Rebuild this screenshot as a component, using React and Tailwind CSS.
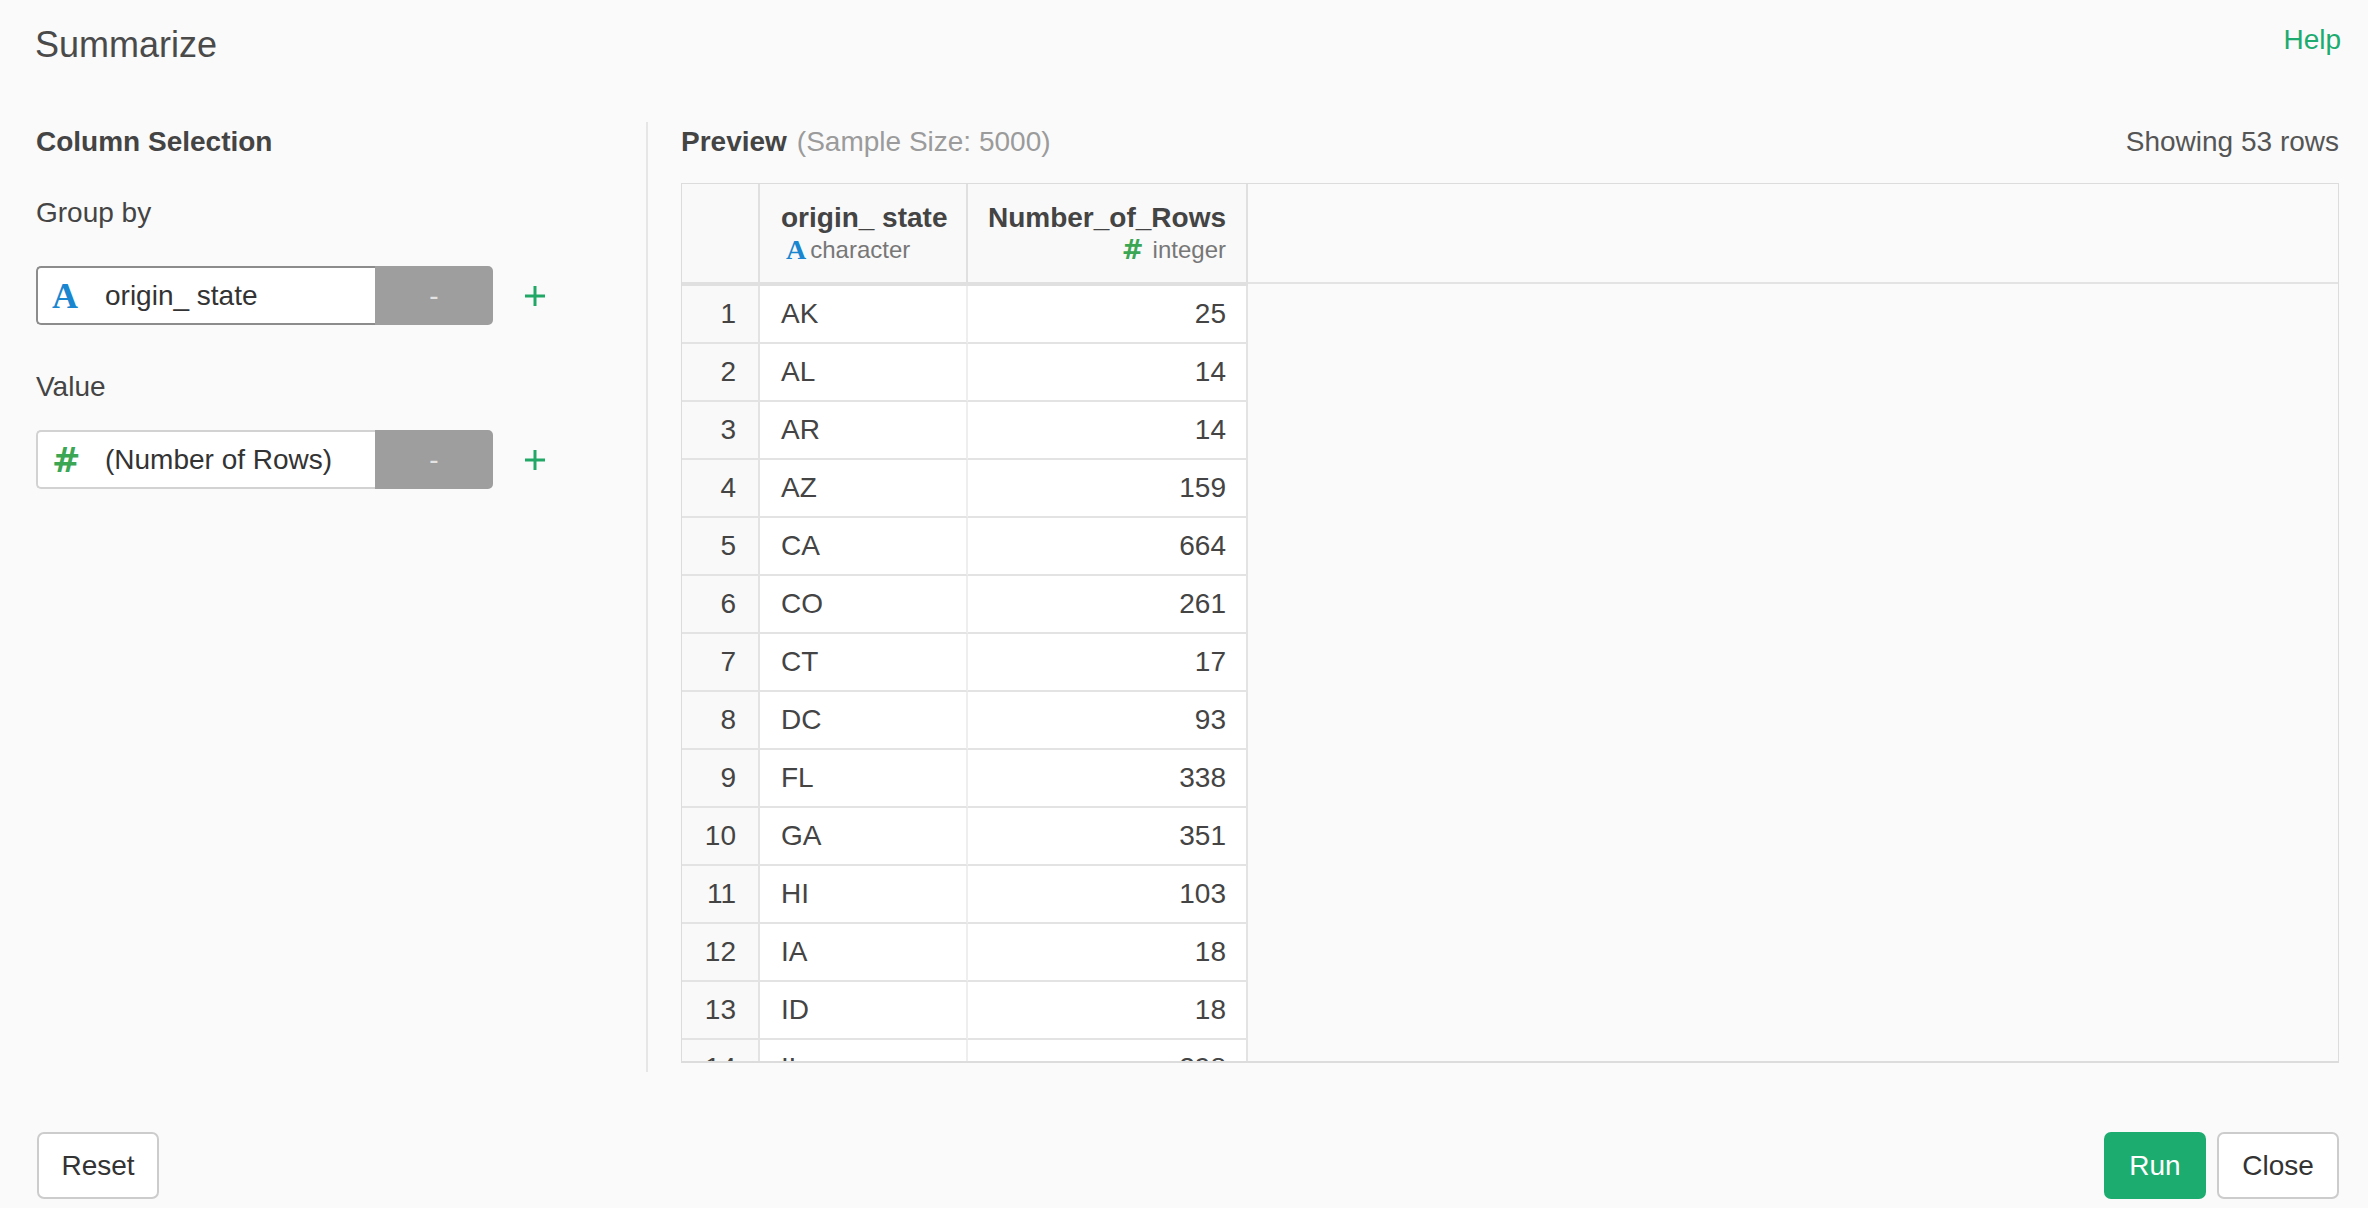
import React from "react";

const rows = [
  [1, "AK", 25],
  [2, "AL", 14],
  [3, "AR", 14],
  [4, "AZ", 159],
  [5, "CA", 664],
  [6, "CO", 261],
  [7, "CT", 17],
  [8, "DC", 93],
  [9, "FL", 338],
  [10, "GA", 351],
  [11, "HI", 103],
  [12, "IA", 18],
  [13, "ID", 18],
  [14, "IL", 298],
];

const sans = { fontFamily: '"Liberation Sans", Arial, sans-serif' };

function IconA({ size }) {
  return (
    <span
      className={`font-bold text-[#1a86d0] leading-none ${size}`}
      style={{ fontFamily: '"Liberation Serif", "DejaVu Serif", serif' }}
    >
      A
    </span>
  );
}

function IconHash({ size }) {
  return (
    <span
      className={`font-bold text-[#3ba654] leading-none ${size}`}
      style={{ fontFamily: '"DejaVu Sans", sans-serif' }}
    >
      #
    </span>
  );
}

function Plus() {
  return (
    <svg width="22" height="22" viewBox="0 0 22 22" className="ml-[31px]">
      <path d="M11 1 V21 M1 11 H21" stroke="#22a866" strokeWidth="3" fill="none" />
    </svg>
  );
}

function ColumnInput({ icon, label, borderClass }) {
  return (
    <div className="flex items-center">
      <div className="flex w-[457px] h-[59px]">
        <div
          className={`flex-1 flex items-center bg-white border-2 border-r-0 rounded-l-[5px] pl-[14px] ${borderClass}`}
        >
          <div className="w-[53px] flex items-center">{icon}</div>
          <span className="text-[28px] leading-[28px] text-[#333]">{label}</span>
        </div>
        <div className="w-[118px] bg-[#9e9e9e] rounded-r-[5px] flex items-center justify-center text-[#e4e4e4] text-[28px] leading-[28px]">
          -
        </div>
      </div>
      <Plus />
    </div>
  );
}

export default function App() {
  return (
    <div
      className="w-[2368px] h-[1208px] bg-[#fafafa] flex flex-col text-[#444] overflow-hidden"
      style={sans}
    >
      {/* Header */}
      <div className="h-[122px] flex items-start justify-between">
        <div className="pl-[35px] pt-[27px] text-[36px] leading-[36px] text-[#4a4a4a]">
          Summarize
        </div>
        <div className="pr-[27px] pt-[26px] text-[28px] leading-[28px] text-[#1dab6f]">
          Help
        </div>
      </div>

      {/* Main */}
      <div className="h-[950px] flex">
        {/* Left panel */}
        <div className="w-[646px] shrink-0 pl-[36px] flex flex-col">
          <div className="mt-[6px] h-[28px] text-[28px] leading-[28px] font-bold text-[#444]">
            Column Selection
          </div>
          <div className="mt-[43px] h-[28px] text-[28px] leading-[28px] text-[#444]">
            Group by
          </div>
          <div className="mt-[39px]">
            <ColumnInput
              icon={<IconA size="text-[36px]" />}
              label="origin_ state"
              borderClass="border-[#8c8c8c]"
            />
          </div>
          <div className="mt-[48px] h-[28px] text-[28px] leading-[28px] text-[#444]">
            Value
          </div>
          <div className="mt-[29px]">
            <ColumnInput
              icon={<IconHash size="text-[34px]" />}
              label="(Number of Rows)"
              borderClass="border-[#d2d2d2]"
            />
          </div>
        </div>

        {/* Right panel */}
        <div className="flex-1 border-l-2 border-[#e6e6e6] pl-[33px] pr-[29px] pb-[9px] flex flex-col">
          <div className="mt-[6px] h-[28px] flex justify-between text-[28px] leading-[28px]">
            <div>
              <span className="font-bold text-[#444]">Preview</span>
              <span className="ml-[10px] text-[#9b9b9b]">(Sample Size: 5000)</span>
            </div>
            <div className="text-[#555]">Showing 53 rows</div>
          </div>

          <div className="mt-[27px] h-[880px] border border-b-2 border-[#dcdcdc] overflow-hidden flex flex-col">
            {/* Header row */}
            <div className="flex shrink-0">
              <div className="w-[78px] h-[102px] border-r-2 border-b-4 border-[#e0e0e0] bg-[#f9f9f9]" />
              <div className="w-[208px] h-[102px] border-r-2 border-b-4 border-[#e0e0e0] bg-[#f9f9f9] pl-[21px] pt-[20px] flex flex-col">
                <div className="text-[28px] leading-[28px] font-bold text-[#444]">origin_ state</div>
                <div className="mt-[3px] h-[30px] flex items-center text-[24px] leading-[30px] text-[#777]">
                  <span className="ml-[5px] mr-[4px] flex items-center">
                    <IconA size="text-[28px]" />
                  </span>
                  character
                </div>
              </div>
              <div className="w-[280px] h-[102px] border-r-2 border-b-4 border-[#e0e0e0] bg-[#f9f9f9] pr-[20px] pt-[20px] flex flex-col items-end">
                <div className="text-[28px] leading-[28px] font-bold text-[#444]">Number_of_Rows</div>
                <div className="mt-[3px] h-[30px] flex items-center text-[24px] leading-[30px] text-[#777]">
                  <span className="mr-[9px] flex items-center">
                    <IconHash size="text-[26px]" />
                  </span>
                  integer
                </div>
              </div>
              <div className="flex-1 h-[100px] border-b-2 border-[#e3e3e3]" />
            </div>

            {/* Body rows */}
            {rows.map(([n, st, v]) => (
              <div key={n} className="flex shrink-0 h-[58px]">
                <div className="w-[78px] border-r-2 border-b-2 border-[#e3e3e3] bg-[#f9f9f9] pr-[22px] flex items-center justify-end text-[28px] leading-[28px] text-[#444]">
                  {n}
                </div>
                <div className="w-[208px] border-r-2 border-b-2 border-[#e3e3e3] border-r-[#eeeeee] bg-white pl-[21px] flex items-center text-[28px] leading-[28px] text-[#444]">
                  {st}
                </div>
                <div className="w-[280px] border-r-2 border-b-2 border-[#e3e3e3] bg-white pr-[20px] flex items-center justify-end text-[28px] leading-[28px] text-[#444]">
                  {v}
                </div>
                <div className="flex-1" />
              </div>
            ))}
          </div>
        </div>
      </div>

      {/* Footer */}
      <div className="mt-[60px] h-[67px] flex justify-between pl-[37px] pr-[29px]">
        <button className="w-[122px] h-[67px] bg-white border-2 border-[#cccccc] rounded-[7px] text-[28px] leading-[28px] text-[#333]">
          Reset
        </button>
        <div className="flex gap-[11px]">
          <button className="w-[102px] h-[67px] bg-[#1dac6f] rounded-[7px] text-[28px] leading-[28px] text-white">
            Run
          </button>
          <button className="w-[122px] h-[67px] bg-white border-2 border-[#cccccc] rounded-[7px] text-[28px] leading-[28px] text-[#333]">
            Close
          </button>
        </div>
      </div>
    </div>
  );
}
